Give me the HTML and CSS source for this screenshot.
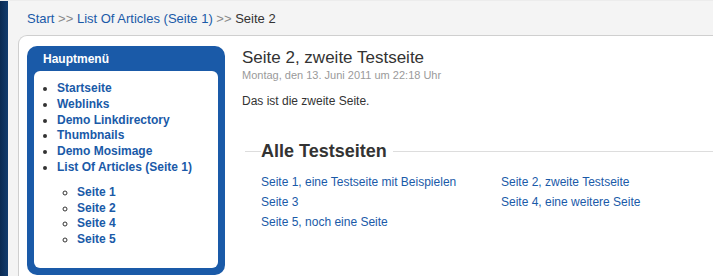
FILE: index.html
```html
<!DOCTYPE html>
<html lang="de">
<head>
    <meta charset="UTF-8">
    <title>Seite 2, zweite Testseite</title>
    <link rel="stylesheet" href="styles.css">
</head>
<body>
    <div class="page">
        <div class="edge"></div>
        <div class="main">
            <div class="breadcrumbs">
                <a href="#">Start</a> <span class="sep">&gt;&gt;</span> <a href="#">List Of Articles (Seite 1)</a> <span class="sep">&gt;&gt;</span> Seite 2
            </div>
            <div class="content">
                <div class="module">
                    <h3>Hauptmenü</h3>
                    <div class="module-body">
                        <ul class="menu">
                            <li><a href="#">Startseite</a></li>
                            <li><a href="#">Weblinks</a></li>
                            <li><a href="#">Demo Linkdirectory</a></li>
                            <li><a href="#">Thumbnails</a></li>
                            <li><a href="#">Demo Mosimage</a></li>
                            <li><a href="#">List Of Articles (Seite 1)</a>
                                <ul>
                                    <li><a href="#">Seite 1</a></li>
                                    <li><a href="#">Seite 2</a></li>
                                    <li><a href="#">Seite 4</a></li>
                                    <li><a href="#">Seite 5</a></li>
                                </ul>
                            </li>
                        </ul>
                    </div>
                </div>
                <div class="article">
                    <h2>Seite 2, zweite Testseite</h2>
                    <div class="date">Montag, den 13. Juni 2011 um 22:18 Uhr</div>
                    <p>Das ist die zweite Seite.</p>

                    <fieldset class="toc">
                        <legend>Alle Testseiten</legend>
                        <div class="toc-grid">
                            <a href="#">Seite 1, eine Testseite mit Beispielen</a>
                            <a href="#">Seite 2, zweite Testseite</a>
                            <a href="#">Seite 3</a>
                            <a href="#">Seite 4, eine weitere Seite</a>
                            <a href="#">Seite 5, noch eine Seite</a>
                        </div>
                    </fieldset>
                </div>
            </div>
        </div>
    </div>
</body>
</html>
```

FILE: styles.css
```css
body {
    margin: 0;
    font-family: "Liberation Sans", Arial, sans-serif;
    background-color: #f4f4f4;
    color: #333;
    overflow: hidden;
}
a {
    color: #1a5aa8;
    text-decoration: none;
}
.page {
    display: flex;
    min-height: 276px;
    border-top: 1px solid #ececec;
}
.edge {
    width: 8px;
    flex-shrink: 0;
    background: linear-gradient(to right, #0a2a52, #123c6e);
}
.main {
    flex: 1;
    padding-left: 10px;
}
.breadcrumbs {
    font-size: 13px;
    padding: 10px 0 0 9px;
    height: 24px;
    color: #333;
}
.breadcrumbs .sep {
    color: #888;
}
.content {
    display: flex;
    align-items: flex-start;
    background-color: #ffffff;
    border-top: 1px solid #cfcfcf;
    border-left: 1px solid #cfcfcf;
    border-top-left-radius: 9px;
    padding: 10px 0 0 8px;
    height: 240px;
}
.module {
    width: 184px;
    flex-shrink: 0;
    background-color: #1a5aa8;
    border-radius: 10px;
    padding: 0 7px 7px;
}
.module h3 {
    margin: 0;
    color: #ffffff;
    font-size: 12px;
    font-weight: bold;
    padding: 6px 0 0 9px;
    height: 19px;
}
.module-body {
    background-color: #ffffff;
    border-radius: 6px;
    padding: 10px 0 20px;
}
.menu {
    margin: 0;
    padding-left: 23px;
    font-size: 12px;
    font-weight: bold;
    line-height: 15.8px;
}
.menu ul {
    margin: 9px 0 0;
    padding-left: 20px;
    list-style-type: circle;
}
.article {
    flex: 1;
    padding: 1px 0 0 17px;
}
.article h2 {
    margin: 0;
    font-size: 17px;
    font-weight: normal;
    line-height: 21px;
}
.date {
    font-size: 11px;
    color: #9a9a9a;
    line-height: 14px;
}
.article p {
    font-size: 12px;
    margin: 12px 0 0;
}
.toc {
    margin: 33px 0 0 3px;
    padding: 0 0 0 16px;
    border: none;
    border-top: 1px solid #dddddd;
}
.toc legend {
    font-size: 18px;
    font-weight: bold;
    padding: 0 6px 0 0;
}
.toc-grid {
    display: grid;
    grid-template-columns: 240px 1fr;
    row-gap: 6px;
    padding-top: 13px;
    font-size: 12px;
}
```
